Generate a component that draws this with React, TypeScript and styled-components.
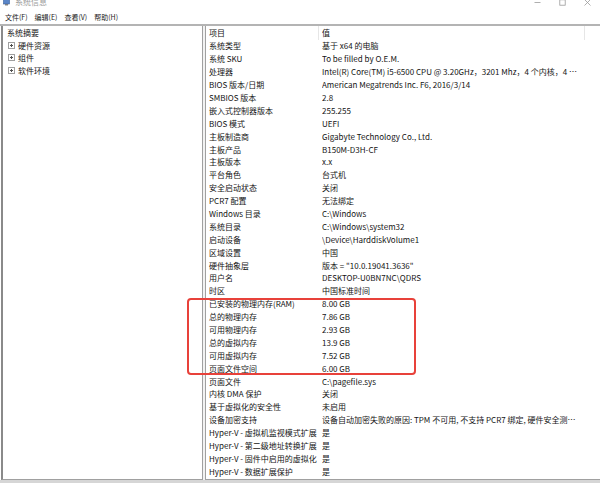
import React from "react";
import styled, { createGlobalStyle } from "styled-components";

const GlobalStyle = createGlobalStyle`
  html, body { margin: 0; padding: 0; background: #ffffff; overflow: hidden; }
  body {
    font-family: "Noto Sans CJK SC", "Noto Sans", sans-serif;
    font-size: 8px;
    color: #141414;
  }
`;

const Window = styled.div`
  position: relative;
  width: 600px;
  height: 483px;
  display: flex;
  flex-direction: column;
  background: #fff;
  overflow: hidden;
`;

const TitleBar = styled.div`
  height: 10px;
  display: flex;
  align-items: flex-start;
  overflow: hidden;
`;

const TitleInner = styled.div`
  display: flex;
  align-items: center;
  gap: 5px;
  padding-left: 3px;
  transform: translateY(-4px);
  flex: 1;
  height: 12px;
`;

const TitleText = styled.span`
  color: #9a9a9a;
  font-size: 8px;
  line-height: 12px;
`;

const Controls = styled.div`
  display: flex;
  transform: translateY(-4px);
  height: 12px;
`;

const ControlBtn = styled.div`
  width: 25px;
  height: 12px;
  display: flex;
  align-items: center;
  justify-content: center;
`;

const MenuBar = styled.div`
  height: 14px;
  display: flex;
  align-items: center;
  padding-left: 5px;
  gap: 7px;
  border-bottom: 2px solid #b4b4b4;
`;

const MenuItem = styled.span`
  font-size: 7px;
  color: #222;
`;

const Main = styled.div`
  flex: 1;
  display: flex;
  min-height: 0;
  padding-left: 1px;
`;

const LeftPane = styled.div`
  width: 196px;
  border-left: 2px solid #8a8a8a;
  border-right: 1px solid #a0a0a0;
  border-bottom: 1px solid #a0a0a0;
  padding-left: 3px;
  display: flex;
  flex-direction: column;
`;

const TreeItem = styled.div<{ $root?: boolean }>`
  height: 12.7px;
  display: flex;
  align-items: center;
  gap: 3px;
  padding-left: ${(p) => (p.$root ? "1px" : "2px")};
  white-space: nowrap;
`;

const Expander = styled.span`
  width: 5px;
  height: 5px;
  border: 1px solid #a0a0a0;
  position: relative;
  flex: none;
  &::before {
    content: "";
    position: absolute;
    left: 1px;
    right: 1px;
    top: 2px;
    height: 1px;
    background: #505050;
  }
  &::after {
    content: "";
    position: absolute;
    top: 1px;
    bottom: 1px;
    left: 2px;
    width: 1px;
    background: #505050;
  }
`;

const Splitter = styled.div`
  width: 2px;
  background: #f2f2f2;
`;

const RightPane = styled.div`
  flex: 1;
  min-width: 0;
  border-left: 1px solid #a0a0a0;
  border-bottom: 1px solid #a0a0a0;
  display: flex;
  flex-direction: column;
`;

const Row = styled.div<{ $header?: boolean }>`
  display: grid;
  grid-template-columns: 113px 266px 1fr;
  height: ${(p) => (p.$header ? "13.5px" : "12.9px")};
  align-items: center;
  white-space: nowrap;
`;

const Cell = styled.div<{ $header?: boolean; $label?: boolean }>`
  height: 100%;
  display: flex;
  align-items: center;
  overflow: ${(p) => (p.$label ? "visible" : "hidden")};
  padding-left: 3px;
  border-right: ${(p) => (p.$header ? "1px solid #e6e6e6" : "none")};
  min-width: 0;
`;

const CellText = styled.span<{ $clip?: boolean }>`
  overflow: ${(p) => (p.$clip ? "hidden" : "visible")};
  text-overflow: ${(p) => (p.$clip ? "ellipsis" : "clip")};
  white-space: nowrap;
  padding-right: ${(p) => (p.$clip ? "3px" : "0")};
`;

const BottomBar = styled.div`
  height: 3px;
  background: #d6d6d6;
`;

const Highlight = styled.div`
  position: absolute;
  left: 187px;
  top: 298px;
  width: 229px;
  height: 77px;
  border: 2px solid #e8413a;
  border-radius: 4px;
  box-sizing: border-box;
  pointer-events: none;
`;

const rows: [string, string][] = [
  ["系统类型", "基于 x64 的电脑"],
  ["系统 SKU", "To be filled by O.E.M."],
  ["处理器", "Intel(R) Core(TM) i5-6500 CPU @ 3.20GHz，3201 Mhz，4 个内核，4 个逻辑处理器"],
  ["BIOS 版本/日期", "American Megatrends Inc. F6, 2016/3/14"],
  ["SMBIOS 版本", "2.8"],
  ["嵌入式控制器版本", "255.255"],
  ["BIOS 模式", "UEFI"],
  ["主板制造商", "Gigabyte Technology Co., Ltd."],
  ["主板产品", "B150M-D3H-CF"],
  ["主板版本", "x.x"],
  ["平台角色", "台式机"],
  ["安全启动状态", "关闭"],
  ["PCR7 配置", "无法绑定"],
  ["Windows 目录", "C:\\Windows"],
  ["系统目录", "C:\\Windows\\system32"],
  ["启动设备", "\\Device\\HarddiskVolume1"],
  ["区域设置", "中国"],
  ["硬件抽象层", "版本 = \"10.0.19041.3636\""],
  ["用户名", "DESKTOP-U0BN7NC\\QDRS"],
  ["时区", "中国标准时间"],
  ["已安装的物理内存(RAM)", "8.00 GB"],
  ["总的物理内存", "7.86 GB"],
  ["可用物理内存", "2.93 GB"],
  ["总的虚拟内存", "13.9 GB"],
  ["可用虚拟内存", "7.52 GB"],
  ["页面文件空间", "6.00 GB"],
  ["页面文件", "C:\\pagefile.sys"],
  ["内核 DMA 保护", "关闭"],
  ["基于虚拟化的安全性", "未启用"],
  ["设备加密支持", "设备自动加密失败的原因: TPM 不可用, 不支持 PCR7 绑定, 硬件安全测试界面失败, 设备不支持现代待机"],
  ["Hyper-V - 虚拟机监视模式扩展", "是"],
  ["Hyper-V - 第二级地址转换扩展", "是"],
  ["Hyper-V - 固件中启用的虚拟化", "是"],
  ["Hyper-V - 数据扩展保护", "是"],
];

const AppIcon = () => (
  <svg width="7" height="7" viewBox="0 0 7 7">
    <rect x="0.5" y="0.5" width="6" height="4.5" fill="#5a86c8" stroke="#3a5f9a" strokeWidth="0.6" />
    <rect x="2" y="5.2" width="3" height="1.2" fill="#6c6c6c" />
  </svg>
);

export default function App() {
  return (
    <>
      <GlobalStyle />
      <Window>
        <TitleBar>
          <TitleInner>
            <AppIcon />
            <TitleText>系统信息</TitleText>
          </TitleInner>
          <Controls>
            <ControlBtn>
              <svg width="7" height="7" viewBox="0 0 7 7">
                <line x1="0.5" y1="3.5" x2="6.5" y2="3.5" stroke="#9a9a9a" strokeWidth="0.8" />
              </svg>
            </ControlBtn>
            <ControlBtn>
              <svg width="7" height="7" viewBox="0 0 7 7">
                <rect x="0.8" y="0.8" width="5.4" height="5.4" fill="none" stroke="#9a9a9a" strokeWidth="0.8" />
              </svg>
            </ControlBtn>
            <ControlBtn>
              <svg width="7" height="7" viewBox="0 0 7 7">
                <path d="M0.5 0.5 L6.5 6.5 M6.5 0.5 L0.5 6.5" stroke="#9a9a9a" strokeWidth="0.8" />
              </svg>
            </ControlBtn>
          </Controls>
        </TitleBar>
        <MenuBar>
          <MenuItem>文件(F)</MenuItem>
          <MenuItem>编辑(E)</MenuItem>
          <MenuItem>查看(V)</MenuItem>
          <MenuItem>帮助(H)</MenuItem>
        </MenuBar>
        <Main>
          <LeftPane>
            <TreeItem $root>系统摘要</TreeItem>
            <TreeItem>
              <Expander />
              硬件资源
            </TreeItem>
            <TreeItem>
              <Expander />
              组件
            </TreeItem>
            <TreeItem>
              <Expander />
              软件环境
            </TreeItem>
          </LeftPane>
          <Splitter />
          <RightPane>
            <Row $header>
              <Cell $header>
                <CellText $clip>项目</CellText>
              </Cell>
              <Cell $header>
                <CellText $clip>值</CellText>
              </Cell>
              <Cell />
            </Row>
            {rows.map(([k, v]) => (
              <Row key={k}>
                <Cell $label>
                  <CellText>{k}</CellText>
                </Cell>
                <Cell>
                  <CellText $clip>{v}</CellText>
                </Cell>
                <Cell />
              </Row>
            ))}
          </RightPane>
        </Main>
        <BottomBar />
        <Highlight />
      </Window>
    </>
  );
}
